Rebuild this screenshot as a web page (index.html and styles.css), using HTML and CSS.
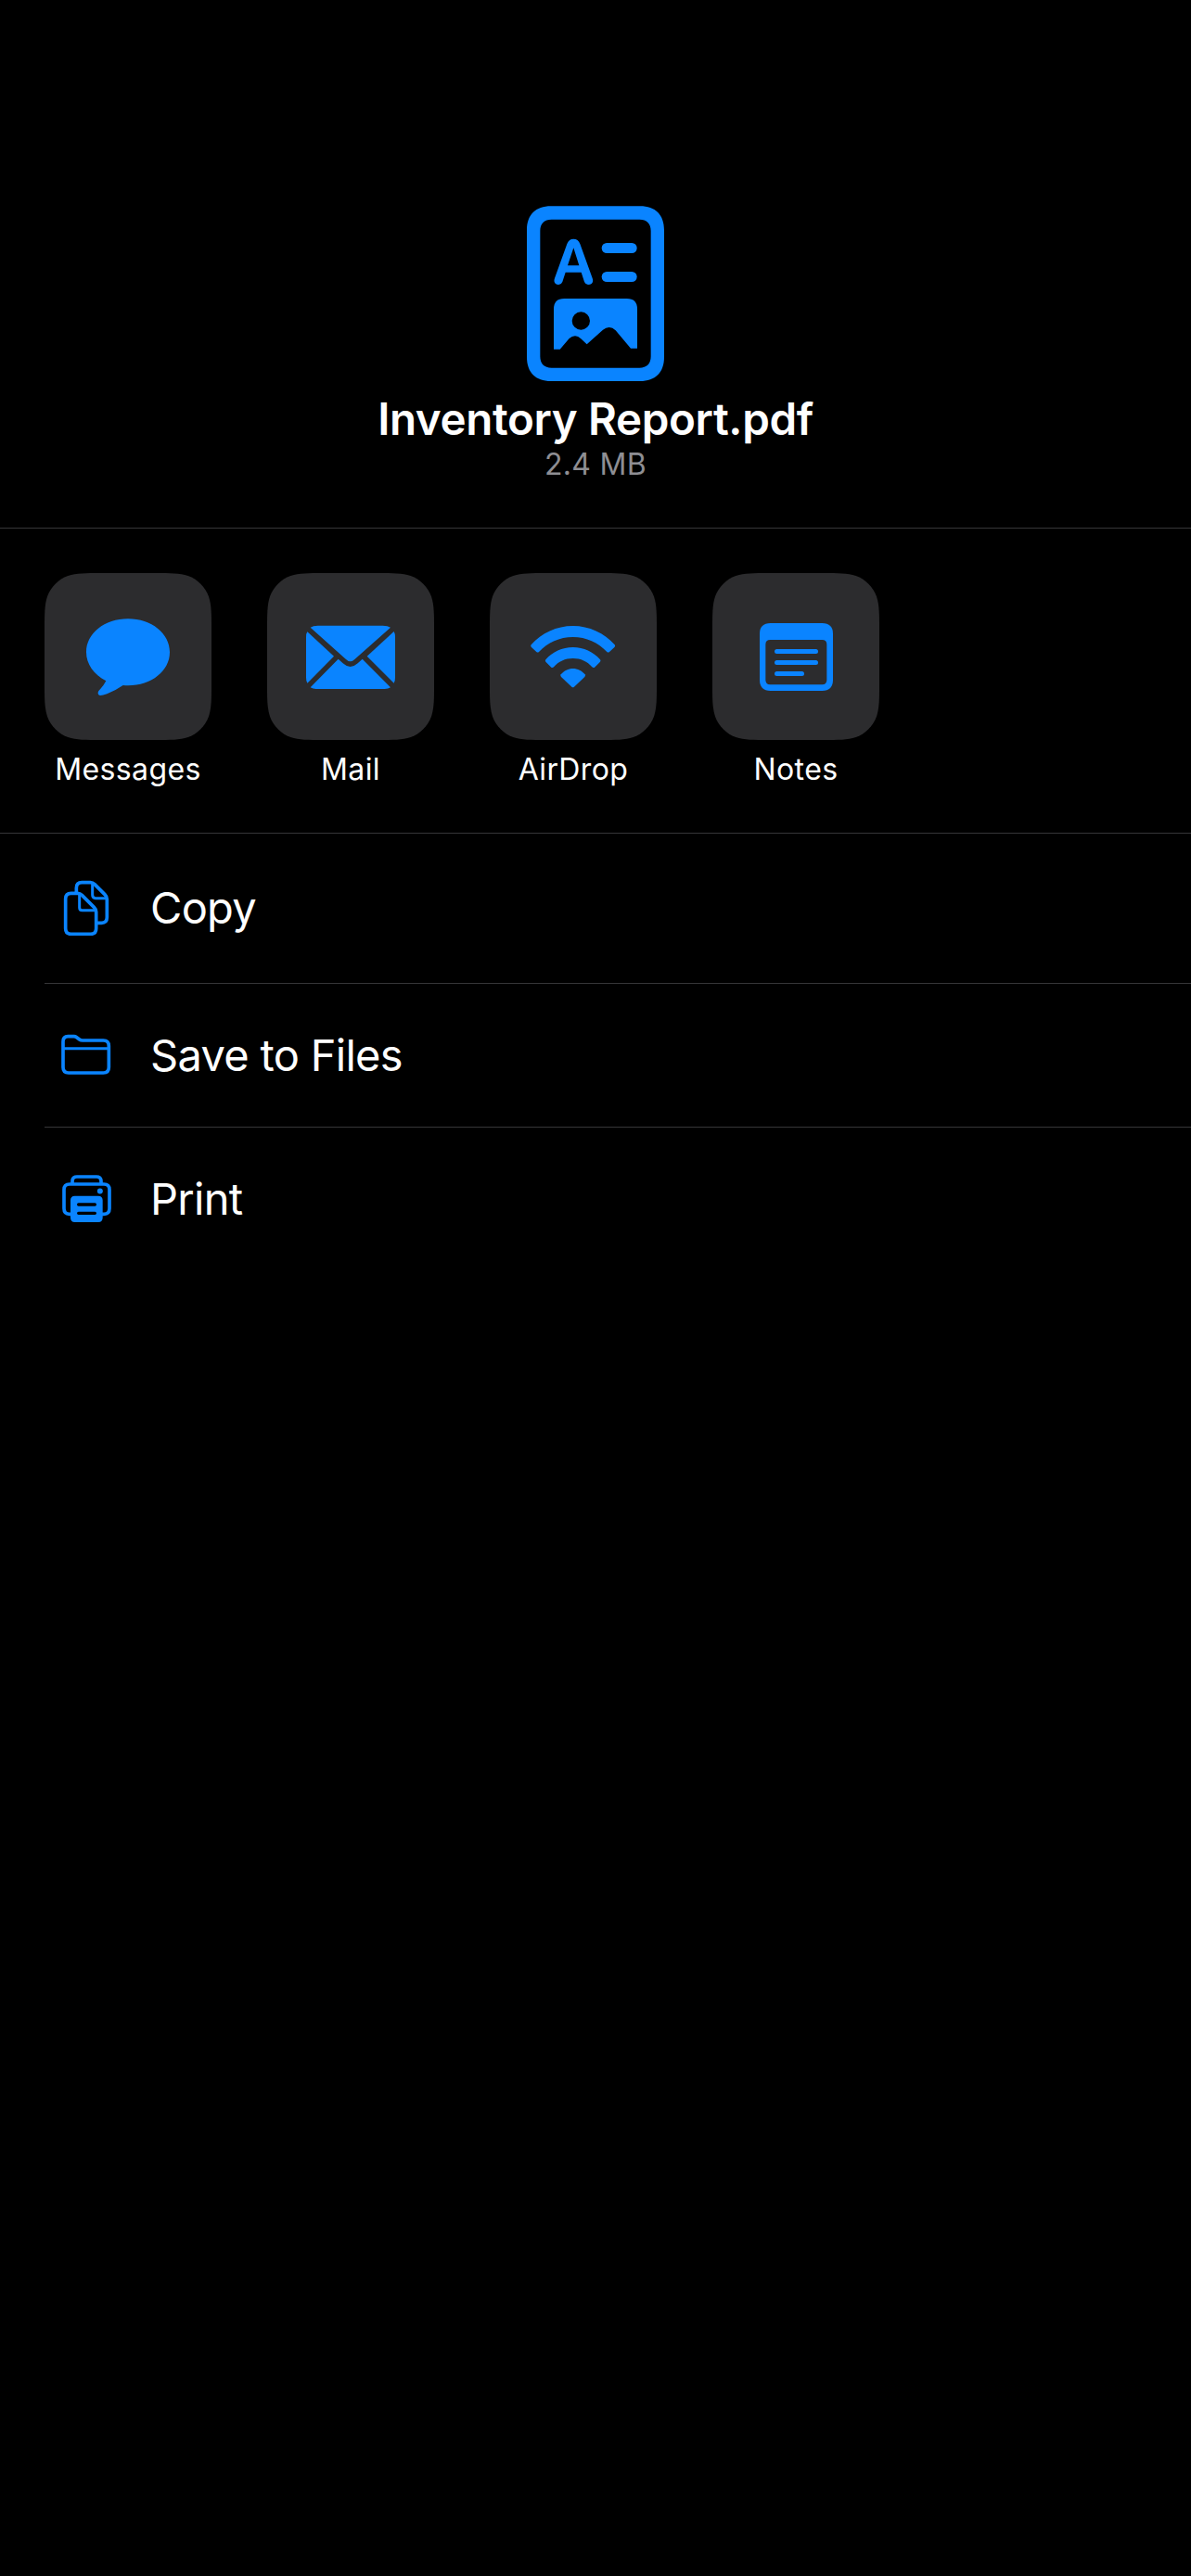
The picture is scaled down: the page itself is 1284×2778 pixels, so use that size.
FILE: index.html
```html
<!DOCTYPE html>
<html lang="en">
<head>
<meta charset="utf-8">
<title>Share</title>
<link rel="stylesheet" href="styles.css">
</head>
<body>
<svg class="defs" aria-hidden="true">
  <symbol id="tile" viewBox="0 0 540 540">
    <path d="M183.4 0H356.6C409.4 0 435.8 0 464.2 9C495.3 20.3 519.7 44.7 531 75.8C540 104.2 540 130.6 540 183.4V356.6C540 409.4 540 435.8 531 464.2C519.7 495.3 495.3 519.7 464.2 531C435.8 540 409.4 540 356.6 540H183.4C130.6 540 104.2 540 75.8 531C44.7 519.7 20.3 495.3 9 464.2C0 435.8 0 409.4 0 356.6V183.4C0 130.6 0 104.2 9 75.8C20.3 44.7 44.7 20.3 75.8 9C104.2 0 130.6 0 183.4 0Z"/>
  </symbol>
</svg>
<main class="sheet">
  <header class="document">
    <svg class="document-icon" viewBox="54 36 444 567">
      <path class="fill" fill-rule="evenodd" d="M132 37H420C470 37 498 65 498 115V525C498 575 470 603 420 603H132C82 603 54 575 54 525V115C54 65 82 37 132 37ZM134 80C110 80 97 93 97 117V523C97 547 110 560 134 560H418C442 560 455 547 455 523V117C455 93 442 80 418 80Z"/>
      <path class="fill" fill-rule="evenodd" d="M184 159Q190 143 205 143Q220 143 226 159L266 270Q270 281 264 287Q259 291 252 291Q243 290 240 282L230 251H179L169 282Q166 290 157 291Q150 291 146 287Q140 281 144 270ZM205 172L186 229H223Z"/>
      <rect class="fill" x="296" y="156" width="114" height="33" rx="16.500"/>
      <rect class="fill" x="296" y="249" width="114" height="33" rx="16.500"/>
      <path class="fill" fill-rule="evenodd" d="M175 336H377Q411 336 411 370V497H390L341 439Q331 429 320 429Q310 429 300 437L248 484L228 465Q220 457 210 457Q200 457 191 465L161 500H141V370Q141 336 175 336ZM229 379A29 29 0 1 0 229 437A29 29 0 1 0 229 379Z"/>
    </svg>
    <h1 class="document-name">Inventory Report.pdf</h1>
    <p class="document-size">2.4 MB</p>
  </header>

  <section class="apps">
    <div class="app">
      <svg class="app-icon" viewBox="24 54 540 540">
        <use class="tile" href="#tile" x="24" y="54" width="540" height="540"/>
        <path class="fill" d="M294 202C370 202 429 249 429 310C429 371 370 418 294 418Q286 418 278 417Q252 435 226 445Q212 450 205 450Q196 449 197 440Q198 436 204 430Q217 415 223 403C183 383 159 348 159 310C159 249 218 202 294 202Z"/>
      </svg>
      <span class="app-name">Messages</span>
    </div>
    <div class="app">
      <svg class="app-icon" viewBox="24 54 540 540">
        <use class="tile" href="#tile" x="24" y="54" width="540" height="540"/>
        <path class="fill" d="M164 230Q172 224 188 224H398Q414 224 423 230L308 332Q300 340 293 340Q286 340 278 332Z"/>
        <path class="fill" d="M154 244L240 323L154 410Q150 405 150 393V260Q150 250 154 244Z"/>
        <path class="fill" d="M434 243L347 323L434 410Q438 405 438 393V260Q438 250 434 243Z"/>
        <path class="fill" d="M164 424L254 332L269 346Q281 357 293 357Q305 357 317 346L332 332L423 424Q416 429 404 429H182Q172 429 164 424Z"/>
      </svg>
      <span class="app-name">Mail</span>
    </div>
    <div class="app">
      <svg class="app-icon" viewBox="24 54 540 540">
        <use class="tile" href="#tile" x="24" y="54" width="540" height="540"/>
        <path class="fill" d="M158 286C192 248 240 225 293 225C346 225 394 248 428 286Q431 289 428 293L411 309Q407 312 403 309C375 279 336 261 293 261C250 261 211 279 183 309Q179 312 175 309L158 293Q155 289 158 286Z"/>
        <path class="fill" d="M205 334C227 309 258 294 293 294C328 294 359 309 381 334Q384 337 381 341L363 359Q359 362 355 358C340 340 318 330 293 330C268 330 246 340 231 358Q227 362 223 359L205 341Q202 337 205 334Z"/>
        <path class="fill" d="M254 382C264 370 278 363 293 363C308 363 322 370 332 382Q335 386 331 390L297 422Q293 425 289 422L255 390Q251 386 254 382Z"/>
      </svg>
      <span class="app-name">AirDrop</span>
    </div>
    <div class="app">
      <svg class="app-icon" viewBox="24 54 540 540">
        <use class="tile" href="#tile" x="24" y="54" width="540" height="540"/>
        <path class="fill" fill-rule="evenodd" d="M212 216H379Q414 216 414 251V400Q414 435 379 435H212Q177 435 177 400V251Q177 216 212 216ZM211 270Q196 270 196 285V400Q196 415 211 415H379Q394 415 394 400V285Q394 270 379 270Z"/>
        <rect class="fill" x="225" y="300" width="141" height="15" rx="7.500"/>
        <rect class="fill" x="225" y="336" width="141" height="15" rx="7.500"/>
        <rect class="fill" x="225" y="372" width="96" height="15" rx="7.500"/>
      </svg>
      <span class="app-name">Notes</span>
    </div>
  </section>

  <ul class="actions">
    <li class="action action-first">
      <svg class="action-icon" viewBox="72 177 174 180">
        <path class="line" d="M127 218V203Q127 185 145 185H172Q180 185 186 191L219 224Q226 231 226 239V298Q226 316 208 316H194"/>
        <path class="line thin" d="M179 188V226Q179 236 189 236H224"/>
        <path class="line" d="M110 220H131Q139 220 145 226L184 265Q191 272 191 280V334Q191 352 173 352H110Q92 352 92 334V238Q92 220 110 220Z"/>
        <path class="line thin" d="M137 223V266Q137 275 146 275H189"/>
      </svg>
      <span class="action-name">Copy</span>
    </li>
    <li class="action">
      <svg class="action-icon" viewBox="72 174 174 180">
        <path class="line" d="M100 203H119Q124 203 128 206L137 213Q141 216 147 216H214Q232 216 232 234V303Q232 321 214 321H102Q84 321 84 303V220Q84 203 100 203Z"/>
        <path class="line thin" d="M84 242H232"/>
      </svg>
      <span class="action-name">Save to Files</span>
    </li>
    <li class="action action-last">
      <svg class="action-icon" viewBox="72 189 174 180">
        <path class="line" d="M114 232V222Q114 207 129 207H192Q207 207 207 222V232"/>
        <path class="line" d="M112 328H105Q87 328 87 310V249Q87 231 105 231H216Q234 231 234 249V310Q234 328 216 328H209"/>
        <circle class="fill" cx="203.500" cy="253.500" r="9"/>
        <path class="fill" fill-rule="evenodd" d="M122 269H198Q212 269 212 283V340Q212 354 198 354H122Q108 354 108 340V283Q108 269 122 269ZM134 292a5 5 0 0 0 0 10H187a5 5 0 0 0 0-10ZM134 320a5 5 0 0 0 0 10H187a5 5 0 0 0 0-10Z"/>
      </svg>
      <span class="action-name">Print</span>
    </li>
  </ul>
</main>
</body>
</html>
```

FILE: styles.css
```css
* {
  box-sizing: border-box;
}

body {
  margin: 0;
  background: #000;
  color: #fff;
  font-family: Inter, "Liberation Sans", sans-serif;
}

.defs {
  display: none;
}

.sheet {
  min-height: 2778px;
}

.fill {
  fill: #0a84ff;
}

.line {
  fill: none;
  stroke: #0a84ff;
  stroke-width: 11;
  stroke-linejoin: round;
}

.line.thin {
  stroke-width: 9;
}

.document {
  display: flex;
  flex-direction: column;
  align-items: center;
  height: 570px;
  padding-top: 222px;
  border-bottom: 1px solid #363638;
}

.document-icon {
  width: 148px;
  height: 189px;
}

.document-name {
  margin: 12px 0 0;
  font-size: 47.500px;
  font-weight: 600;
  line-height: 58px;
  letter-spacing: -0.350px;
}

.document-size {
  margin: 1px 0 0;
  color: #8e8e93;
  font-size: 32px;
  line-height: 38px;
  letter-spacing: 0.300px;
}

.apps {
  display: flex;
  gap: 60px;
  height: 329px;
  padding: 48px 48px 0;
  border-bottom: 1px solid #363638;
}

.app {
  display: flex;
  flex-direction: column;
  align-items: center;
  gap: 13px;
  width: 180px;
}

.app-icon {
  width: 180px;
  height: 180px;
}

.tile {
  fill: #2c2c2e;
}

.app-name {
  font-size: 32px;
  line-height: 38px;
  letter-spacing: 0.400px;
}

.actions {
  margin: 0;
  padding: 0 0 0 48px;
  list-style: none;
}

.action {
  display: flex;
  align-items: center;
  gap: 40px;
  height: 155px;
  padding-left: 16px;
  border-bottom: 1px solid #363638;
}

.action-first {
  height: 162px;
  padding-bottom: 1px;
}

.action-last {
  height: 154px;
  border-bottom: 0;
}

.action-icon {
  width: 58px;
  height: 60px;
}

.action-name {
  font-size: 47px;
  line-height: 58px;
  letter-spacing: -0.700px;
}
```
